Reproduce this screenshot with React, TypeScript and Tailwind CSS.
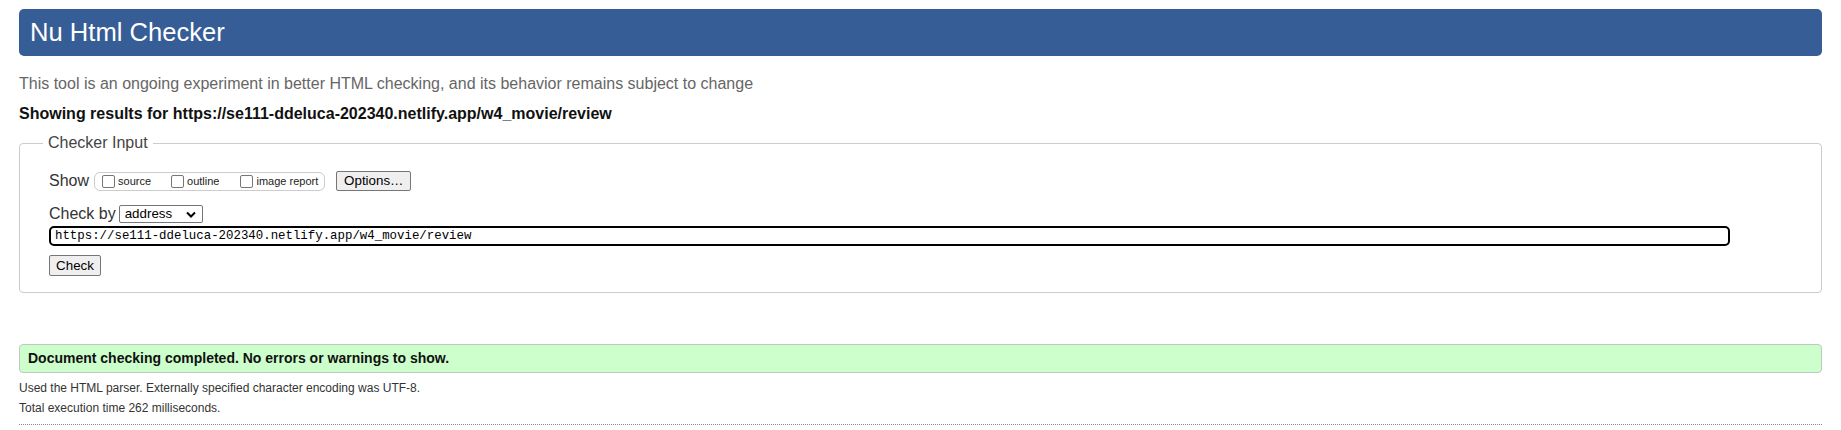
import React from 'react';

const URL = 'https://se111-ddeluca-202340.netlify.app/w4_movie/review';

const Checkbox: React.FC<{ label: string; className?: string }> = ({ label, className }) => (
  <label className={`flex items-center ${className ?? ''}`}>
    <span className="w-[13px] h-[13px] border border-[#767676] rounded-[2px] bg-white shrink-0" />
    <span className="ml-[3px] text-[11px] leading-[13px] text-[#222]">{label}</span>
  </label>
);

const Button: React.FC<{ children: React.ReactNode; className?: string }> = ({ children, className }) => (
  <span
    className={`inline-flex items-center justify-center h-[20px] bg-[#efefef] border border-[#767676] rounded-[2px] text-[13.33px] text-black ${className ?? ''}`}
  >
    {children}
  </span>
);

const App: React.FC = () => {
  return (
    <div className="bg-white px-[19px] pt-[9px] font-['Liberation_Sans',Arial,sans-serif] text-[#333]">
      <header className="h-[47px] flex items-center pl-[11px] bg-[#365d95] rounded-[5px]">
        <h1 className="text-[25.6px] leading-none text-white">Nu Html Checker</h1>
      </header>

      <p className="mt-[18px] text-[16px] leading-[19px] text-[#666]">
        This tool is an ongoing experiment in better HTML checking, and its behavior remains subject to change
      </p>
      <p className="mt-[11px] text-[16px] leading-[19px] font-bold text-[#111]">
        Showing results for {URL}
      </p>

      <fieldset className="mt-[11px] border border-[#ccc] rounded-[4px]">
        <legend className="ml-[23px] px-[5px] text-[16px] leading-[18px] text-[#444]">Checker Input</legend>

        <div className="pl-[29px] pr-[20px] pt-[19px] pb-[16px]">
          <div className="flex items-center h-[20px]">
            <span className="text-[16px] leading-[18px]">Show</span>
            <div className="ml-[5px] flex items-center h-[19px] pl-[7px] pr-[6px] border border-[#ccc] rounded-[6px]">
              <Checkbox label="source" />
              <Checkbox label="outline" className="ml-[20px]" />
              <Checkbox label="image report" className="ml-[21px]" />
            </div>
            <Button className="ml-[11px] w-[75px]">Options…</Button>
          </div>

          <div className="mt-[14px] flex items-center h-[18px]">
            <span className="text-[16px] leading-[18px]">Check by</span>
            <div className="ml-[3px] w-[84px] h-[18px] flex items-center justify-between pl-[5px] pr-[6px] border border-[#767676] rounded-[2px] bg-white">
              <span className="text-[13.33px] leading-none text-black">address</span>
              <svg width="10" height="7" viewBox="0 0 10 7">
                <polyline points="1,1.5 5,5.5 9,1.5" fill="none" stroke="#000" strokeWidth="2" />
              </svg>
            </div>
          </div>

          <div className="mt-[3px] w-[1681px] h-[20px] flex items-center pl-[4px] border-2 border-black rounded-[5px] bg-white">
            <span className="font-['Liberation_Mono',monospace] text-[12.4px] leading-none text-black">{URL}</span>
          </div>

          <div className="mt-[9px] flex">
            <Button className="w-[52px] h-[21px]">Check</Button>
          </div>
        </div>
      </fieldset>

      <div className="mt-[51px] h-[29px] flex items-center pl-[8px] bg-[#ccffcc] border border-[#bbcbbb] rounded-[4px]">
        <span className="text-[14px] font-bold text-[#111]">Document checking completed. No errors or warnings to show.</span>
      </div>

      <p className="mt-[5px] text-[12px] leading-[20px] text-[#333]">
        Used the HTML parser. Externally specified character encoding was UTF-8.
      </p>
      <p className="text-[12px] leading-[20px] text-[#333]">Total execution time 262 milliseconds.</p>

      <div className="mt-[6px] border-t border-dotted border-[#888]" />
    </div>
  );
};

export default App;
